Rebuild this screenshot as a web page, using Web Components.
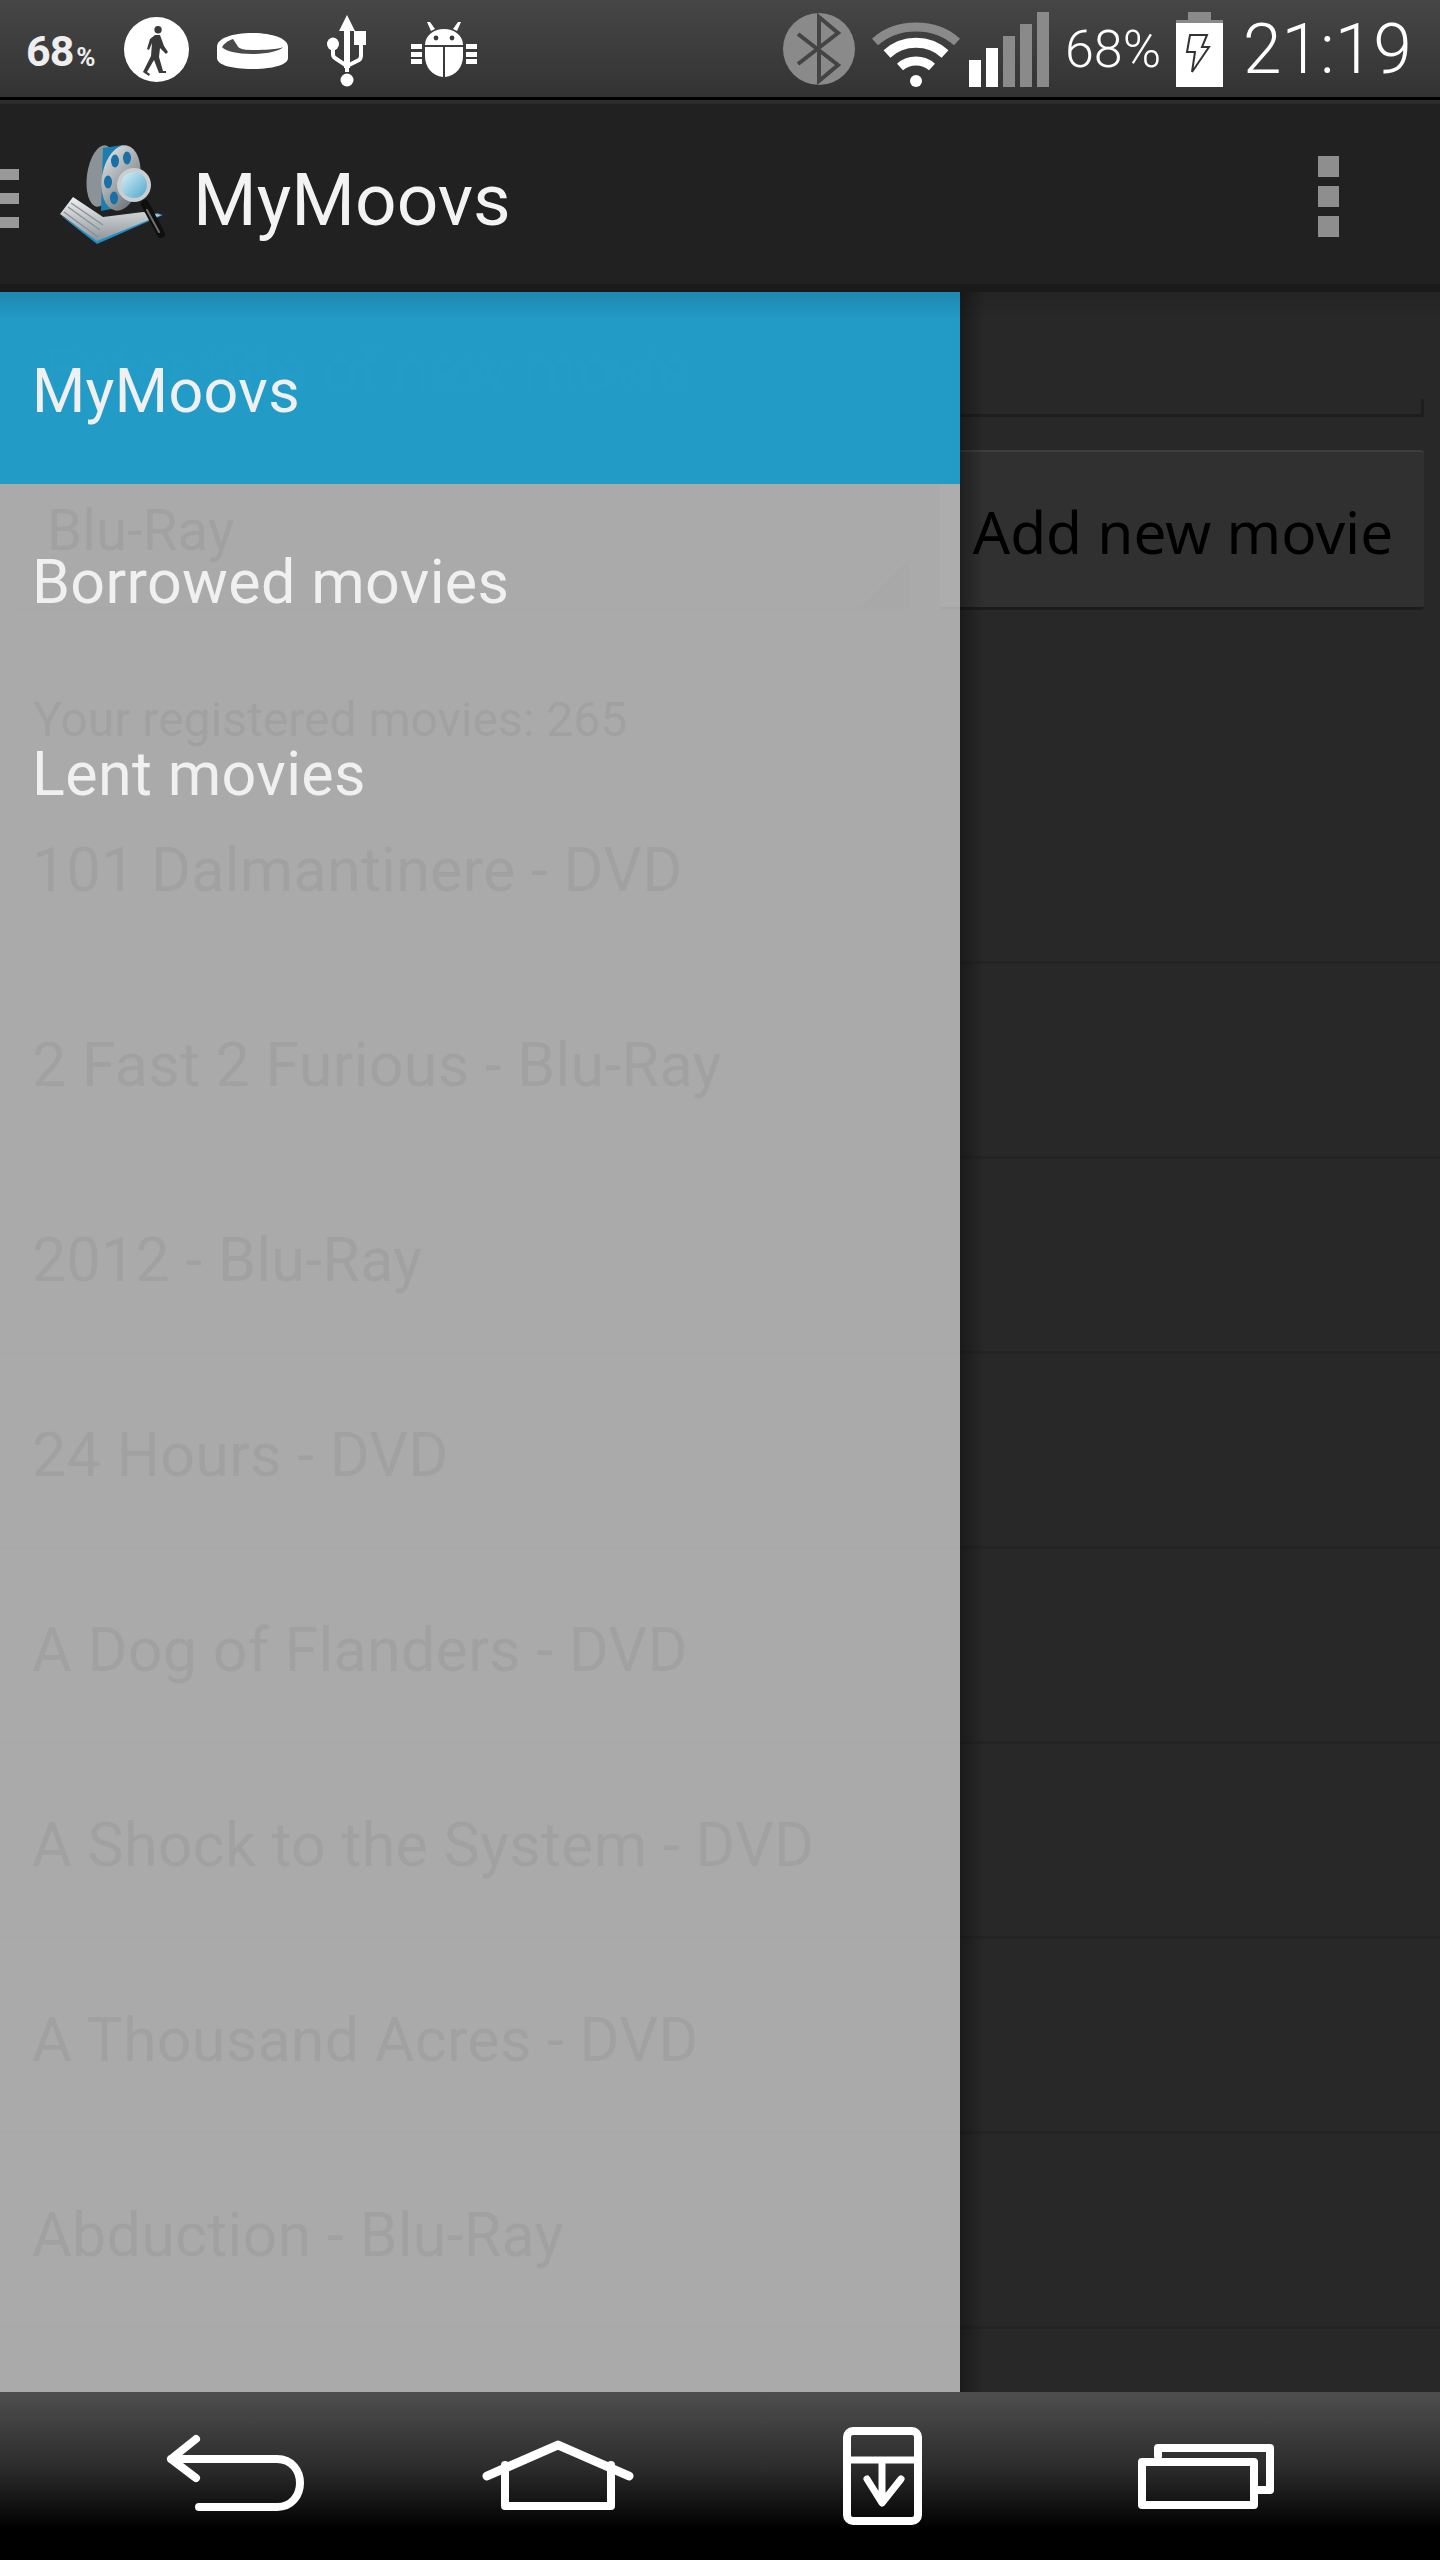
<!DOCTYPE html>
<html>
<head>
<meta charset="utf-8">
<title>MyMoovs</title>
<style>
  html, body { margin: 0; padding: 0; background: #000; }
  body { width: 1440px; height: 2560px; overflow: hidden; font-family: Roboto, "Liberation Sans", sans-serif; }
</style>
</head>
<body>
<phone-shell>
  <status-bar slot="status"></status-bar>
  <action-bar slot="action" title-text="MyMoovs"></action-bar>
  <movie-screen slot="content">
    <movie-form slot="form" total="265" format="Blu-Ray"></movie-form>
    <movie-row>101 Dalmantinere - DVD</movie-row>
    <movie-row>2 Fast 2 Furious - Blu-Ray</movie-row>
    <movie-row>2012 - Blu-Ray</movie-row>
    <movie-row>24 Hours - DVD</movie-row>
    <movie-row>A Dog of Flanders - DVD</movie-row>
    <movie-row>A Shock to the System - DVD</movie-row>
    <movie-row>A Thousand Acres - DVD</movie-row>
    <movie-row>Abduction - Blu-Ray</movie-row>
    <nav-drawer slot="drawer">
      <drawer-item selected>MyMoovs</drawer-item>
      <drawer-item>Borrowed movies</drawer-item>
      <drawer-item>Lent movies</drawer-item>
    </nav-drawer>
  </movie-screen>
  <nav-bar slot="nav"></nav-bar>
</phone-shell>

<script>
// Contenedor general: barra de estado, action bar, contenido y navegación
class PhoneShell extends HTMLElement {
  constructor() {
    super();
    this.attachShadow({ mode: 'open' });
  }
  connectedCallback() {
    this.shadowRoot.innerHTML = `
      <style>
        :host { display: flex; flex-direction: column; width: 1440px; height: 2560px; }
        .main { flex: 1; min-height: 0; display: flex; }
      </style>
      <slot name="status"></slot>
      <slot name="action"></slot>
      <div class="main"><slot name="content"></slot></div>
      <slot name="nav"></slot>
    `;
  }
}
customElements.define('phone-shell', PhoneShell);

// Barra de estado. Cada svg usa el alto completo de la barra, así su viewBox coincide con la pantalla
class StatusBar extends HTMLElement {
  constructor() {
    super();
    this.attachShadow({ mode: 'open' });
  }
  connectedCallback() {
    this.shadowRoot.innerHTML = `
      <style>
        :host {
          display: flex;
          align-items: center;
          height: 97px;
          padding-left: 26px;
          padding-right: 29px;
          background: linear-gradient(#464646, #333333);
          color: #fff;
          font-family: Roboto, sans-serif;
          border-bottom: 3px solid #000;
        }
        svg { display: block; height: 97px; flex: none; }
        .zoom { width: 68px; font-weight: 700; font-size: 43px; letter-spacing: -1px; color: #eee; white-space: nowrap; margin-top: 4px; }
        .zoom small { font-size: 26px; margin-left: 3px; }
        .pct { font-weight: 300; font-size: 52px; width: 95px; margin-left: 16px; margin-top: 1px; white-space: nowrap; }
        .clock { font-weight: 300; font-size: 69.5px; width: 165px; margin-left: 20px; padding-right: 3px; margin-top: 1px; white-space: nowrap; }
        .spacer { flex: 1; }
      </style>
      <div class="zoom">68<small>%</small></div>
      <svg viewBox="124 0 65 97" width="65" style="margin-left:30px">
        <ellipse cx="156.5" cy="49.5" rx="32.5" ry="32.5" fill="#fff"/>
        <path d="M158 26a3.4 3.4 0 1 1 .1 7.4 3.4 3.4 0 0 1-.1-7.4zM155 35h5l4 11 4 6-2 2-6-6-1 9 4 14h3v2h-7l-5-13-7 12 3 2-1 2-6-4 8-16 1-13-3 7-2-1 3-10z" fill="#3a3a3a"/>
      </svg>
      <svg viewBox="217 0 71 97" width="71" style="margin-left:28px">
        <path d="M217 47c0-9 16-14 35-14s36 5 36 14v11c0 7-16 11-36 11s-35-4-35-11z" fill="#fff"/>
        <path d="M222 47c3 4 15 7 30 7s28-3 31-7c0 0-4 3-31 3-17 0-27-3-30-3z" fill="#4a4a4a"/>
        <path d="M222 47c2-3 5-6 11-8l4 6c1 3 5 4 8 5-10 0-20-1-23-3z" fill="#4a4a4a"/>
      </svg>
      <svg viewBox="327 0 40 97" width="40" style="margin-left:39px">
        <path d="M347 15l8 16h-5v37h-6V31h-5z" fill="#fff"/>
        <circle cx="347" cy="80" r="6.5" fill="#fff"/>
        <path d="M347 72v-6l-12-8c-2-1-2-2-2-4v-6" fill="none" stroke="#fff" stroke-width="4"/>
        <path d="M347 66l12-6c2-1 2-3 2-5V44" fill="none" stroke="#fff" stroke-width="4"/>
        <ellipse cx="333" cy="44" rx="6" ry="6.5" fill="#fff"/>
        <rect x="354" y="31" width="12" height="14" fill="#fff"/>
      </svg>
      <svg viewBox="411 0 66 97" width="66" style="margin-left:44px">
        <path d="M427 22l4 9 4-2-5-7zM461 22l-4 9-4-2 5-7z" fill="#fff"/>
        <path d="M425 45c0-9 8-16 19-16s19 7 19 16z" fill="#fff"/>
        <path d="M425 47h18v30c-11-1-18-10-18-21zM445 47h18v9c0 11-7 20-18 21z" fill="#fff"/>
        <circle cx="436" cy="38" r="2.4" fill="#3a3a3a"/><circle cx="452" cy="38" r="2.4" fill="#3a3a3a"/>
        <path d="M411 44h11v5h-11zM411 52h11v5h-11zM411 59h11v5h-11zM466 44h11v5h-11zM466 52h11v5h-11zM466 59h11v5h-11z" fill="#fff"/>
      </svg>
      <div class="spacer"></div>
      <svg viewBox="783 0 72 97" width="72">
        <ellipse cx="819" cy="49" rx="36" ry="36" fill="#8a8a8a"/>
        <path d="M798 34l40 31-19 16V17l19 16-40 31" fill="none" stroke="#444" stroke-width="4"/>
      </svg>
      <svg viewBox="872 0 88 97" width="88" style="margin-left:17px">
        <path d="M875 42c22-20 60-20 82 0" fill="none" stroke="#8a8a8a" stroke-width="9"/>
        <path d="M887 54c16-15 42-15 58 0" fill="none" stroke="#fff" stroke-width="10"/>
        <path d="M900 67c9-8 23-8 32 0" fill="none" stroke="#fff" stroke-width="9"/>
        <ellipse cx="916" cy="81" rx="6" ry="6" fill="#fff"/>
      </svg>
      <svg viewBox="969 0 80 97" width="80" style="margin-left:9px">
        <rect x="969" y="60" width="12" height="27" fill="#fff"/>
        <rect x="986" y="48" width="12" height="39" fill="#fff"/>
        <rect x="1003" y="36" width="12" height="51" fill="#8a8a8a"/>
        <rect x="1020" y="24" width="12" height="63" fill="#8a8a8a"/>
        <rect x="1037" y="12" width="12" height="75" fill="#8a8a8a"/>
      </svg>
      <div class="pct">68%</div>
      <svg viewBox="1176 0 47 97" width="47" style="margin-left:16px">
        <rect x="1188" y="12" width="23" height="8" fill="#8a8a8a"/>
        <rect x="1176" y="20" width="47" height="3" fill="#8a8a8a"/>
        <rect x="1176" y="23" width="47" height="64" fill="#fff"/>
        <path d="M1190 35h17l-5 12h7l-17 25 3-20h-8z" fill="#fff" stroke="#333" stroke-width="2"/>
      </svg>
      <div class="clock">21:19</div>
    `;
  }
}
customElements.define('status-bar', StatusBar);

// Action bar con el icono de la app y el menú de desbordamiento
class ActionBar extends HTMLElement {
  constructor() {
    super();
    this.attachShadow({ mode: 'open' });
  }
  connectedCallback() {
    this.shadowRoot.innerHTML = `
      <style>
        :host {
          display: flex;
          align-items: center;
          height: 180px;
          background: #212121;
          border-top: 4px solid #2d2d2d;
          border-bottom: 8px solid #1a1a1a;
          color: #f3f3f3;
          font-family: Roboto, sans-serif;
        }
        .burger { width: 19px; display: grid; gap: 13px; margin-top: 9px; }
        .burger i { display: block; height: 11px; background: #999; }
        svg { display: block; flex: none; margin-left: 41px; }
        h1 { margin: 12px 0 0 28px; font-weight: 400; font-size: 73px; line-height: 84px; flex: 1; }
        .more { display: grid; gap: 9px; width: 21px; margin-right: 101px; margin-top: 4px; }
        .more i { display: block; height: 21px; background: #8e8e8e; }
      </style>
      <div class="burger"><i></i><i></i><i></i></div>
      <svg width="105" height="102" viewBox="60 143 105 102">
        <defs>
          <linearGradient id="steel" x1="0" y1="0" x2="1" y2="1"><stop offset="0" stop-color="#e4e8ea"/><stop offset="1" stop-color="#5f666c"/></linearGradient>
          <linearGradient id="lens" x1="0" y1="0" x2="1" y2="1"><stop offset="0" stop-color="#d8f0f8"/><stop offset="1" stop-color="#4fa8cc"/></linearGradient>
          <linearGradient id="page" x1="0" y1="0" x2="0" y2="1"><stop offset="0" stop-color="#f0f2f3"/><stop offset="1" stop-color="#8d959a"/></linearGradient>
        </defs>
        <path d="M60 215l37 29 66-29-6-2-60 26z" fill="#1f8fc4"/>
        <path d="M73 197l30 20 40-5 18 3-64 26-37-27z" fill="url(#page)"/>
        <path d="M64 212l34 25M68 207l32 23M71 203l32 22" stroke="#8a9297" stroke-width="1.4" fill="none"/>
        <ellipse cx="101" cy="176" rx="14" ry="31" transform="rotate(8 101 176)" fill="#8b9298"/>
        <path d="M103 148l20-3-6 63-16 3z" fill="#1a7fb0"/>
        <ellipse cx="121" cy="178" rx="19" ry="33" transform="rotate(10 121 178)" fill="url(#steel)"/>
        <ellipse cx="127" cy="158" rx="4" ry="6.5" fill="#1a6fa5"/>
        <ellipse cx="115" cy="161" rx="4" ry="6.5" fill="#1a6fa5"/>
        <ellipse cx="108" cy="182" rx="4" ry="6.5" fill="#1a6fa5"/>
        <ellipse cx="114" cy="198" rx="4" ry="6.5" fill="#1a6fa5"/>
        <path d="M145 204l16 30" stroke="#0f0f0f" stroke-width="8" stroke-linecap="round"/>
        <path d="M147 210l12 22" stroke="#6f6f6f" stroke-width="2" stroke-linecap="round"/>
        <circle cx="134" cy="185" r="17" fill="#c9ced1"/>
        <circle cx="134" cy="185" r="13" fill="url(#lens)"/>
      </svg>
      <h1>${this.getAttribute('title-text')}</h1>
      <div class="more"><i></i><i></i><i></i></div>
    `;
  }
}
customElements.define('action-bar', ActionBar);

// Pantalla principal: el cajón se superpone al formulario y a la lista
class MovieScreen extends HTMLElement {
  constructor() {
    super();
    this.attachShadow({ mode: 'open' });
  }
  connectedCallback() {
    this.shadowRoot.innerHTML = `
      <style>
        :host { display: block; position: relative; flex: 1; overflow: hidden; background: #282828; }
        .shade {
          position: absolute; left: 0; right: 0; top: 0; height: 28px;
          background: linear-gradient(rgba(0,0,0,.12), rgba(0,0,0,0));
        }
      </style>
      <slot name="form"></slot>
      <slot></slot>
      <slot name="drawer"></slot>
      <div class="shade"></div>
    `;
  }
}
customElements.define('movie-screen', MovieScreen);

// Formulario que queda detrás del cajón
class MovieForm extends HTMLElement {
  constructor() {
    super();
    this.attachShadow({ mode: 'open' });
  }
  connectedCallback() {
    const total = this.getAttribute('total');
    const format = this.getAttribute('format');
    this.shadowRoot.innerHTML = `
      <style>
        :host { display: block; height: 477px; box-sizing: border-box; padding: 0 16px; font-family: Roboto, sans-serif; color: #111; }
        .field {
          height: 125px; box-sizing: border-box; padding: 48px 0 0 28px;
          border-bottom: 3px solid #1e1e1e; position: relative;
          font-size: 62px; line-height: 60px; color: #6e6e6e;
        }
        .field::after { content: ""; position: absolute; right: 0; bottom: 0; width: 3px; height: 15px; background: #1e1e1e; }
        .line { display: flex; gap: 31px; margin-top: 33px; height: 160px; }
        .spinner {
          flex: 1; box-sizing: border-box; padding: 51px 0 0 31px; position: relative;
          border-bottom: 3px solid #242424; font-size: 56.5px; line-height: 60px;
        }
        .spinner::after {
          content: ""; position: absolute; right: 0; bottom: 0; width: 0; height: 0;
          border-style: solid; border-width: 0 0 48px 48px; border-color: transparent transparent #222 transparent;
        }
        .add {
          width: 484px; flex: none; box-sizing: border-box; background: #303030; border-radius: 4px;
          border-top: 2px solid #3e3e3e; border-bottom: 3px solid #1c1c1c;
          display: flex; align-items: center; justify-content: center;
          color: #000; font-family: "Noto Sans", sans-serif; font-size: 58.5px; padding: 2px 0 0 2px;
        }
        .count { margin-top: 80px; padding-left: 17px; font-size: 48px; line-height: 60px; white-space: nowrap; }
      </style>
      <div class="field">Enter title of new movie</div>
      <div class="line">
        <div class="spinner">${format}</div>
        <div class="add">Add new movie</div>
      </div>
      <div class="count">Your registered movies: ${total}</div>
    `;
  }
}
customElements.define('movie-form', MovieForm);

// Fila de la lista de películas
class MovieRow extends HTMLElement {
  constructor() {
    super();
    this.attachShadow({ mode: 'open' });
  }
  connectedCallback() {
    this.shadowRoot.innerHTML = `
      <style>
        :host {
          display: block; height: 195px; box-sizing: border-box; padding: 63px 0 0 32px;
          border-bottom: 3px solid #242424;
          font-family: Roboto, sans-serif; font-size: 61px; line-height: 76px; letter-spacing: .25px;
          color: #111; white-space: nowrap;
        }
      </style>
      <slot></slot>
    `;
  }
}
customElements.define('movie-row', MovieRow);

// Cajón de navegación semitransparente
class NavDrawer extends HTMLElement {
  constructor() {
    super();
    this.attachShadow({ mode: 'open' });
  }
  connectedCallback() {
    this.shadowRoot.innerHTML = `
      <style>
        :host {
          display: block; position: absolute; left: 0; top: 0; bottom: 0; width: 960px;
          background: rgba(255,255,255,.606);
        }
        :host::after {
          content: ""; position: absolute; left: 100%; top: 0; bottom: 0; width: 24px;
          background: linear-gradient(90deg, rgba(0,0,0,.34), rgba(0,0,0,0));
        }
      </style>
      <slot></slot>
    `;
  }
}
customElements.define('nav-drawer', NavDrawer);

// Opción del cajón; la seleccionada va en azul
class DrawerItem extends HTMLElement {
  constructor() {
    super();
    this.attachShadow({ mode: 'open' });
  }
  connectedCallback() {
    this.shadowRoot.innerHTML = `
      <style>
        :host {
          display: flex; align-items: center; height: 191.5px; box-sizing: border-box;
          padding: 6px 0 0 32px;
          font-family: Roboto, sans-serif; font-size: 61px; letter-spacing: .35px;
          color: #f0f0f0;
        }
        :host([selected]) { background: rgba(27,154,200,.95); }
      </style>
      <slot></slot>
    `;
  }
}
customElements.define('drawer-item', DrawerItem);

// Barra de navegación inferior
class NavBar extends HTMLElement {
  constructor() {
    super();
    this.attachShadow({ mode: 'open' });
  }
  connectedCallback() {
    const s = 'fill="none" stroke="#fff" stroke-linecap="round" stroke-linejoin="round"';
    this.shadowRoot.innerHTML = `
      <style>
        :host {
          display: grid; grid-template-columns: repeat(4, 324px); padding: 0 72px;
          height: 168px; flex: none; box-sizing: border-box;
          background: linear-gradient(#4e4e4e, #2c2c2c 45%, #000 82%);
        }
        .cell { display: flex; justify-content: center; }
        svg { display: block; width: 160px; height: 168px; }
      </style>
      <div class="cell"><svg viewBox="152 2392 160 168"><path d="M194 2439l-25 20 25 19M169 2459H275c15 0 23 12 23 24s-8 24-23 24H197" ${s} stroke-width="8"/></svg></div>
      <div class="cell"><svg viewBox="478 2392 160 168"><path d="M487 2476l71-31 71 31" ${s} stroke-width="9"/><path d="M505 2465v41H611v-41" ${s} stroke-width="8"/></svg></div>
      <div class="cell"><svg viewBox="802 2392 160 168"><rect x="847" y="2431" width="71" height="90" rx="6" ${s} stroke-width="8"/><path d="M847 2460h71M882 2460v40M867 2479l15 24 19-24" ${s} stroke-width="7"/></svg></div>
      <div class="cell"><svg viewBox="1126 2392 160 168"><path d="M1158 2456v-8h112v42h-12" ${s} stroke-width="8"/><rect x="1142" y="2462" width="112" height="43" ${s} stroke-width="8"/></svg></div>
    `;
  }
}
customElements.define('nav-bar', NavBar);
</script>
</body>
</html>
